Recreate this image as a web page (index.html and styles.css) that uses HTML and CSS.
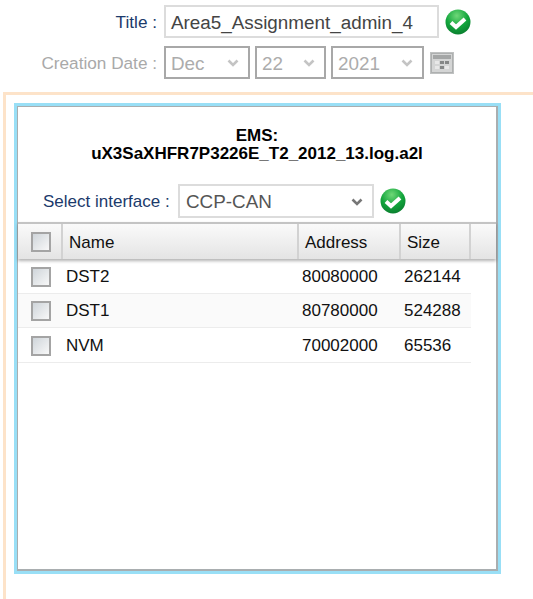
FILE: index.html
```html
<!DOCTYPE html>
<html lang="en">
<head>
<meta charset="utf-8">
<title>Assignment</title>
<link rel="stylesheet" href="styles.css">
</head>
<body>
<svg class="defs" width="0" height="0" aria-hidden="true">
  <defs>
    <radialGradient id="ok" cx="45%" cy="25%" r="80%">
      <stop offset="0" stop-color="#6fd878"/>
      <stop offset=".55" stop-color="#12a53c"/>
      <stop offset="1" stop-color="#0a7a2e"/>
    </radialGradient>
    <symbol id="check" viewBox="0 0 26 26">
      <circle cx="13" cy="13" r="12.5" fill="url(#ok)"/>
      <path d="M6 13.5l5 4.5 9-8" fill="none" stroke="#fff" stroke-width="4"/>
    </symbol>
    <symbol id="chev" viewBox="0 0 12 8">
      <path d="M1.5 1.5L6 6l4.5-4.5" fill="none" stroke="currentColor" stroke-width="2.6"/>
    </symbol>
  </defs>
</svg>
<div class="form">
  <div class="label">Title :</div>
  <div class="controls">
    <div class="field title-field">Area5_Assignment_admin_4</div>
    <svg class="ok"><use href="#check"/></svg>
  </div>
  <div class="label muted">Creation Date :</div>
  <div class="controls date">
    <div class="field pick month">Dec<svg class="chev"><use href="#chev"/></svg></div>
    <div class="field pick day">22<svg class="chev"><use href="#chev"/></svg></div>
    <div class="field pick year">2021<svg class="chev"><use href="#chev"/></svg></div>
    <svg class="cal" viewBox="0 0 24 22">
      <rect width="24" height="22" fill="#bfc1c1"/>
      <rect x="1.5" y="1.5" width="21" height="19" fill="#d4d5d5" stroke="#aeb0b0"/>
      <rect x="3" y="3" width="18" height="4" fill="#a4a6a6"/>
      <rect x="5" y="9" width="4" height="3" fill="#e8e8e8"/>
      <rect x="10" y="9" width="4" height="3" fill="#858787"/>
      <rect x="15" y="9" width="4" height="3" fill="#858787"/>
      <rect x="5" y="14" width="4" height="3" fill="#e8e8e8"/>
      <rect x="10" y="14" width="4" height="3" fill="#858787"/>
      <rect x="15" y="14" width="4" height="3" fill="#e8e8e8"/>
    </svg>
  </div>
</div>
<div class="frame">
  <div class="panel">
    <div class="inner">
      <h1 class="ems">EMS:<br>uX3SaXHFR7P3226E_T2_2012_13.log.a2l</h1>
      <div class="iface">
        <span class="iface-label">Select interface :</span>
        <div class="field pick iface-pick">CCP-CAN<svg class="chev dark"><use href="#chev"/></svg></div>
        <svg class="ok"><use href="#check"/></svg>
      </div>
      <div class="table">
        <div class="head">
          <div class="th c-box"><span class="box"></span></div>
          <div class="th c-name">Name</div>
          <div class="th c-addr">Address</div>
          <div class="th c-size">Size</div>
          <div class="th c-rest"></div>
        </div>
        <div class="row">
          <div class="c-box"><span class="box"></span></div>
          <div class="c-name">DST2</div><div class="c-addr">80080000</div><div class="c-size">262144</div>
        </div>
        <div class="row alt">
          <div class="c-box"><span class="box"></span></div>
          <div class="c-name">DST1</div><div class="c-addr">80780000</div><div class="c-size">524288</div>
        </div>
        <div class="row">
          <div class="c-box"><span class="box"></span></div>
          <div class="c-name">NVM</div><div class="c-addr">70002000</div><div class="c-size">65536</div>
        </div>
      </div>
    </div>
  </div>
</div>
</body>
</html>
```
FILE: styles.css
```css
* { box-sizing: border-box; }
html, body { margin: 0; height: 100%; }
body {
  width: 533px;
  height: 599px;
  overflow: hidden;
  background: #fff;
  font-family: "Liberation Sans", Arial, sans-serif;
  font-size: 17px;
  color: #111;
}
.defs { display: block; height: 0; }

.form {
  display: grid;
  grid-template-columns: 157px 1fr;
  column-gap: 7px;
  row-gap: 8px;
  padding-top: 5px;
}
.label {
  text-align: right;
  height: 33px;
  line-height: 35px;
  color: #1b3a6b;
  font-size: 17.2px;
}
.label.muted { color: #a9a9a9; }
.controls { display: flex; align-items: center; }
.field {
  height: 33px;
  line-height: 31px;
  background: #fff;
  border: 2px solid #dcdcdc;
  color: #444;
  padding-left: 5px;
}
.title-field { width: 275px; font-size: 18.85px; }
.ok { width: 26px; height: 26px; margin-left: 6px; flex: none; }
.date .field {
  border-color: #a8a8a8;
  color: #acacac;
  font-size: 18.85px;
}
.pick { position: relative; }
.chev {
  position: absolute;
  right: 9px;
  top: 11px;
  width: 12px;
  height: 8px;
  color: #c4c4c4;
}
.chev.dark { color: #777; }
.month { width: 86px; }
.day { width: 71px; margin-left: 5px; }
.year { width: 93px; margin-left: 5px; }
.cal { width: 24px; height: 22px; margin-left: 6px; flex: none; }

.frame {
  margin: 13px 0 0 3px;
  height: 507px;
  border-top: 3px solid #fde3c9;
  border-left: 3px solid #fde3c9;
  padding: 8px 0 0 8px;
}
.panel {
  width: 487px;
  height: 471px;
  border: 3px solid #99dff6;
}
.inner {
  height: 100%;
  background: #fff;
  border: 1px solid #a9aeb0;
  border-width: 1px 2px 2px 1px;
}
.ems {
  margin: 0;
  padding-top: 20px;
  text-align: center;
  font-size: 17px;
  line-height: 18px;
  font-weight: bold;
  color: #000;
}
.iface {
  display: flex;
  align-items: center;
  margin-top: 21px;
  padding-left: 25px;
  height: 34px;
}
.iface-label { width: 135px; padding-top: 2px; color: #1b3a6b; }
.iface-pick {
  width: 196px;
  height: 34px;
  font-size: 18.85px;
  line-height: 31px;
  color: #555;
  padding-left: 6px;
}
.iface-pick .chev { top: 12px; }
.iface .ok { margin-left: 6px; }

.table { margin-top: 4px; }
.head {
  display: flex;
  height: 37px;
  border-top: 2px solid #c4c4c4;
  background: linear-gradient(#fafafa, #e4e4e4);
  box-shadow: 0 2px 3px rgba(0, 0, 0, .3);
  color: #111;
}
.th {
  line-height: 37px;
  border-right: 2px solid #d2d2d2;
}
.row {
  display: flex;
  align-items: center;
  width: 453px;
  height: 34.5px;
  padding-top: 2px;
  border-bottom: 1px solid #ececec;
  color: #111;
}
.row.alt { background: #fafafa; }
.c-box { width: 45px; padding-left: 13px; display: flex; align-items: center; flex: none; }
.c-name { width: 236px; flex: none; padding-left: 3px; }
.c-addr { width: 102px; flex: none; padding-left: 3px; }
.c-size { width: 70px; flex: none; padding-left: 3px; }
.th.c-name, .th.c-addr, .th.c-size { padding-left: 6px; }
.th.c-box { height: 35px; }
.c-rest { flex: 1; border-right: 0; }
.box {
  display: block;
  width: 20px;
  height: 20px;
  border: 2px solid #a4a4a4;
  background: linear-gradient(135deg, #cfd5da, #f8f8f8);
}
```
